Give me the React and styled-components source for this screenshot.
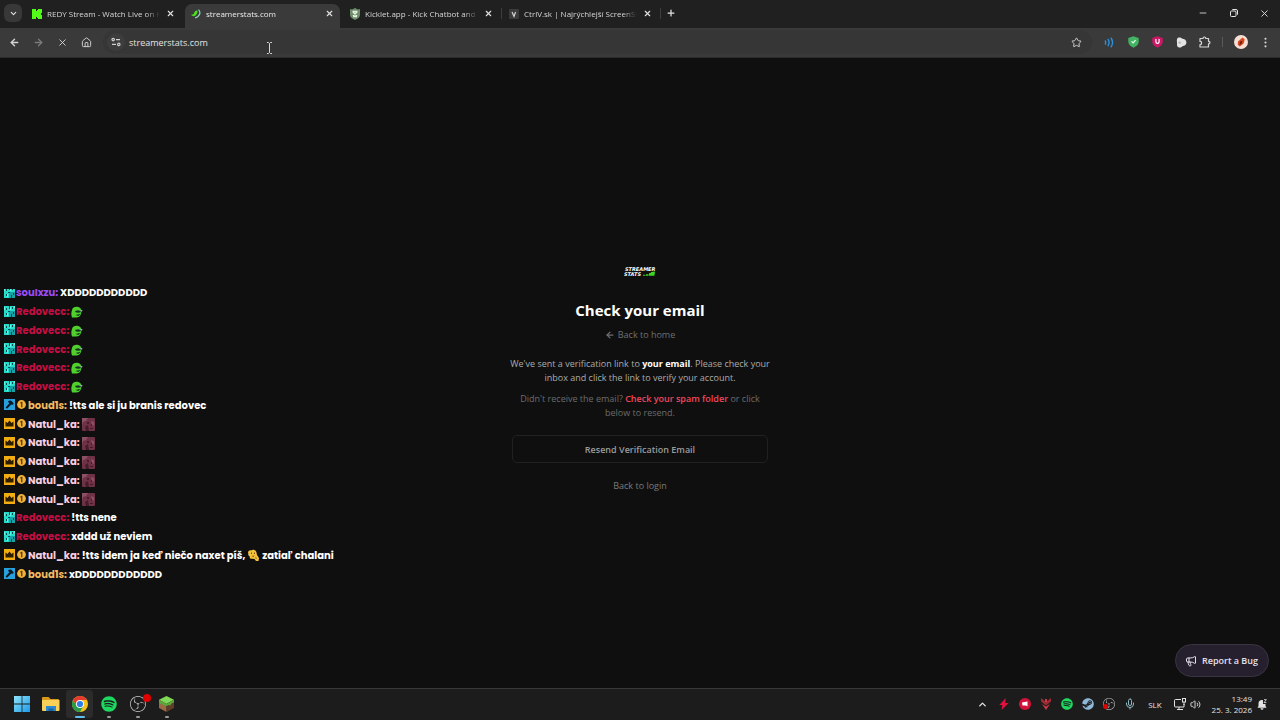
import React, { useState } from 'react';
import styled, { createGlobalStyle } from 'styled-components';
import {
	ArrowLeft,
	ArrowRight,
	ChevronDown,
	ChevronUp,
	EllipsisVertical,
	House,
	Megaphone,
	Mic,
	Minus,
	Plus,
	Star,
	Volume2,
	X,
} from 'lucide-react';
import { FaSpotify, FaSteam } from 'react-icons/fa';
import { SiObsstudio } from 'react-icons/si';

const GlobalStyle = createGlobalStyle`
	* {
		box-sizing: border-box;
	}
	body {
		margin: 0;
		background: #0f0f0f;
		font-family: 'Segoe UI', 'Open Sans', 'Noto Sans', sans-serif;
		font-size: 9px;
		color: #e3e3e3;
	}
	button,
	input {
		font: inherit;
		color: inherit;
		background: none;
		border: none;
		padding: 0;
		margin: 0;
	}
	button {
		cursor: pointer;
	}
	a {
		color: inherit;
		text-decoration: none;
	}
	p,
	h1,
	ul {
		margin: 0;
		padding: 0;
	}
	svg {
		display: block;
		flex-shrink: 0;
	}
`;

/* ---------- drawings ---------- */

const KickIcon = () => (
	<svg width='10' height='10' viewBox='0 0 10 10'>
		<path fill='#53fc18' d='M0 0h4v2h1V1h1V0h4v4H9v1H8v0h1v1h1v4H6V9H5V8H4v2H0z' />
	</svg>
);

const StatsIcon = () => (
	<svg width='10' height='10' viewBox='0 0 10 10'>
		<path fill='#4be01c' d='M0 5.6C1.800 6 3 5 3.300 3.400 4 1.800 5.400 1 6.400 1.600 7 3 6 5.600 4.200 6.800 2.800 7.600 1 7.200 0 5.600z' />
		<path fill='none' stroke='#8fd3c6' strokeWidth='1.200' d='M7.500.6c2.400 2.400 2 6.400-3.500 8.400' />
	</svg>
);

const KickletIcon = () => (
	<svg width='12' height='12' viewBox='0 0 12 12'>
		<path fill='#6e8c6a' d='M1 1l2 .6L6 0l3 1.6L11 1v6c0 2-2.500 4-5 5C3.500 11 1 9 1 7z' />
		<path fill='none' stroke='#e6f1e2' strokeWidth='1.300' d='M3.500 3.500h5M4 8.500h4M4 4l4 4M8 4L4 8' />
	</svg>
);

const CtrlVIcon = () => (
	<svg width='10' height='10' viewBox='0 0 10 10'>
		<rect width='10' height='10' rx='1' fill='#3b3b3b' />
		<path fill='none' stroke='#d5d5d5' strokeWidth='1.200' d='M3 3l2 4.500L6.600 3' />
	</svg>
);

const TuneIcon = () => (
	<svg width='10' height='10' viewBox='0 0 10 10' fill='none' stroke='#d0d0d0' strokeWidth='1.200'>
		<circle cx='2.200' cy='2.600' r='1.200' />
		<path d='M5 2.600h4M1 7.400h4' />
		<circle cx='7.800' cy='7.400' r='1.200' />
	</svg>
);

const WavesIcon = () => (
	<svg width='11' height='11' viewBox='0 0 11 11' fill='none' stroke='#2b8fdb' strokeWidth='1.400'>
		<path d='M1 3.500q1.400 2 0 4M3.800 2q2.600 3.500 0 7M6.800 .8q3.600 4.700 0 9.400' />
	</svg>
);

const ShieldIcon = ({ color, letter }) => (
	<svg width='11' height='12' viewBox='0 0 11 12'>
		<path fill={color} d='M5.500 .3L10.700 2v3.500c0 2.800-2.200 5-5.200 6.200C2.500 10.500.3 8.300.3 5.500V2z' />
		{letter ? (
			<path fill='none' stroke='#fff' strokeWidth='1.200' d='M3.900 3v2.800a1.600 1.600 0 003.200 0V3' />
		) : (
			<path fill='none' stroke='#e9ffee' strokeWidth='1.200' d='M3.600 5.400l1.500 1.500 2.500-2.700' />
		)}
	</svg>
);

const BlobIcon = () => (
	<svg width='11' height='11' viewBox='0 0 11 11'>
		<path fill='#e4e4e4' d='M2 .8c1.600-.9 3.500-.2 4.400 1 2 0 4 1.700 4 3.700S8.800 9 6.800 9C6 10.400 3.600 11 2 10c-1.400-1-.8-2.600-1-4.500C.8 3.800.6 1.700 2 .8z' />
		<circle cx='3.700' cy='5.600' r='1.200' fill='#b3b3b3' />
	</svg>
);

const PuzzleIcon = () => (
	<svg width='12' height='12' viewBox='0 0 12 12' fill='none' stroke='#d6d6d6' strokeWidth='1.200' strokeLinejoin='round'>
		<path d='M1 2.500h3c0-2 2.800-2 2.800 0H9.500v2.800c2 0 2 2.600 0 2.600V11H1V8.600c2.200 0 2.200-3.200 0-3.200z' />
	</svg>
);

const ProfileIcon = () => (
	<svg width='14' height='14' viewBox='0 0 14 14'>
		<circle cx='7' cy='7' r='7' fill='#f8dfd6' />
		<path fill='#d9481c' d='M4 6.500L8.500 2.600l2.200 1.600-1 4.200-4 3.200-2-2z' />
		<path fill='#6b2412' d='M6 6.500l2.500-.7L7.500 9l-2 1z' />
	</svg>
);

const RestoreIcon = () => (
	<svg width='8' height='8' viewBox='0 0 8 8' fill='none' stroke='#e3e3e3'>
		<rect x='.5' y='2' width='5.500' height='5.500' rx='1' />
		<path d='M2.300.5H6A1.500 1.500 0 017.500 2v3.700' />
	</svg>
);

const CursorIcon = () => (
	<svg width='7' height='12' viewBox='0 0 7 12' fill='none' stroke='#d8d8d8'>
		<path d='M1 .5h1.500l1 1 1-1H6M1 11.500h1.500l1-1 1 1H6M3.500 1.500v9' />
	</svg>
);

const SubBadge = () => (
	<svg width='11' height='11' viewBox='0 0 11 11'>
		<path fill='#25dccb' d='M0 0h11v6H5v5H0z' />
		<path fill='#16a3a8' d='M5 5h6v6H5z' />
		<path fill='#0b4a50' d='M2 2h1v2H2zM5 0h1v3H5zM8 1h1v2H8zM2 7h1v2H2zM7 8h1v3H7zM9 6h1v2H9zM4 5h2v1H4z' />
		<path fill='#5ff5e4' d='M0 1h1v3H0zM6 1h1v3H6zM3 7h1v3H3zM10 0h1v2h-1z' />
	</svg>
);

const HammerBadge = () => (
	<svg width='11' height='11' viewBox='0 0 11 11'>
		<rect width='11' height='11' fill='#27a0dd' />
		<path fill='#0b1a22' d='M4 2l3-.4 2.600 2.600-.5 1.500-1.300-.2-1 .6L3 9.800 1.600 8.400 5.200 4.600z' />
	</svg>
);

const CrownBadge = () => (
	<svg width='11' height='11' viewBox='0 0 11 11'>
		<rect width='11' height='11' fill='#f2ad13' />
		<path fill='#2c1d00' d='M1.500 3.500l2 1.500L5.500 2.500l2 2.500 2-1.500v5h-8z' />
	</svg>
);

const CoinBadge = () => (
	<svg width='9' height='9' viewBox='0 0 9 9'>
		<circle cx='4.500' cy='4.500' r='4.400' fill='#f1b23a' />
		<path fill='#59380a' d='M3.200 2.400L4.600 1.800h.8v5.400H4.100V3.300l-.9.3z' />
	</svg>
);

const FrogEmote = () => (
	<svg width='12' height='12' viewBox='0 0 12 12'>
		<path fill='#4fd02c' d='M1 4C1.500 1.500 4 .4 6.500.8c2.200.2 3.500 1.700 4 3.700L10 8c-1 2.500-2.500 3.600-5 3.500H1C0 9 .2 6 1 4z' />
		<path fill='#12351c' d='M4 5C6 4.200 8 4.300 10.500 4.400l1 1.200L8 6.800 5 6.500zM4.500 9l5-1.300-2 2.300z' />
		<path fill='#d6f5e4' d='M7.500 4.800l4-.6-.6 1.400z' />
	</svg>
);

const FaceEmote = () => (
	<svg width='13' height='13' viewBox='0 0 13 13'>
		<rect width='13' height='13' rx='1' fill='#6f3145' />
		<path fill='#8c5060' d='M0 0h6l-2 3-3 1-1 4zM9 3l3 1v4l-2-1z' />
		<path fill='#451c2b' d='M5 4h2v2H5zM9 6h1v2H9zM3 9l3-2 1 6H4zM8 10h3v1H8z' />
	</svg>
);

const WaveEmote = () => (
	<svg width='13' height='13' viewBox='0 0 13 13'>
		<path fill='#f3c33c' d='M1 4c0-2 1.500-3 3-2.500C6-.3 9 1 9.500 3.500L10 6l2 3-.5 3H9L7.500 10 3 9.500 2.500 7z' />
		<path fill='#8a4d14' d='M4 3.500h1V5H4zM7 3.500h1V5H7zM4.500 7l3-.5-1 1.500zM8 9l1-1 1 2z' />
		<path fill='#fff0bb' d='M1 5l2 1-1 1z' />
	</svg>
);

const BrandLogo = () => (
	<svg
		width='32'
		height='10'
		viewBox='0 0 32 10'
		fontFamily='"DejaVu Sans", sans-serif'
		fontWeight='700'
		fontStyle='italic'
		fontSize='5'
	>
		<text x='1' y='4' fill='#fff'>STREAMER</text>
		<text x='0' y='9' fill='#fff'>STATS</text>
		<path fill='#3ed622' d='M19 7.800h2.500v1H19zM22 7.200h2.500v1.600H22zM25 6.200l2-.4V5l4-.6-.6 4.400H25z' />
	</svg>
);

const WindowsIcon = () => (
	<svg width='16' height='16' viewBox='0 0 16 16'>
		<defs>
			<linearGradient id='win' x1='0' y1='0' x2='1' y2='1'>
				<stop offset='0' stopColor='#8fe3fb' />
				<stop offset='1' stopColor='#1b9be8' />
			</linearGradient>
		</defs>
		<path fill='url(#win)' d='M0 0h7.600v7.600H0zM8.400 0H16v7.600H8.400zM0 8.400h7.600V16H0zM8.400 8.400H16V16H8.400z' />
	</svg>
);

const FolderIcon = () => (
	<svg width='18' height='16' viewBox='0 0 18 16'>
		<path fill='#d99a1c' d='M1 1h5.500l2 2H16a1 1 0 011 1v4H0V2a1 1 0 011-1z' />
		<path fill='#f9d058' d='M0 4h17.500v10a1 1 0 01-1 1H1a1 1 0 01-1-1z' />
		<path fill='#2d88cf' d='M4 10h10v5H4z' />
		<path fill='#1767a5' d='M6.500 12.500h5V15h-5z' />
	</svg>
);

const ChromeIcon = () => (
	<svg width='16' height='16' viewBox='0 0 16 16'>
		<circle cx='8' cy='8' r='8' fill='#f6c31c' />
		<path fill='#e33b2e' d='M1.070 4A8 8 0 0114.930 4H8L4.540 10z' />
		<path fill='#279b48' d='M1.070 4A8 8 0 008 16l3.460-6H4.540z' />
		<circle cx='8' cy='8' r='4' fill='#fff' />
		<circle cx='8' cy='8' r='3.100' fill='#2f7de9' />
	</svg>
);

const BlockIcon = () => (
	<svg width='15' height='16' viewBox='0 0 15 16'>
		<path fill='#7ed957' d='M7.500 0L15 3.700 7.500 8 0 3.700z' />
		<path fill='#9a6a45' d='M0 3.700L7.500 8v8L0 12z' />
		<path fill='#5f3d28' d='M15 3.700L7.500 8v8l7.500-4z' />
		<path fill='#5aa83c' d='M0 3.700L7.500 8v2L5.500 9v1.500L3.500 8.300 1.500 8 0 6zM15 3.700L7.500 8v2l2-1 1.500.5 2-2.500 2-.6z' />
	</svg>
);

const BoltIcon = () => (
	<svg width='10' height='12' viewBox='0 0 10 12'>
		<path fill='#e0103f' d='M6.800 0L.3 7h3L2.600 12 9.700 5H6.200z' />
	</svg>
);

const RedDotIcon = () => (
	<svg width='12' height='12' viewBox='0 0 12 12'>
		<circle cx='6' cy='6' r='6' fill='#d3123b' />
		<path fill='#fff' d='M3 4.500L8.500 3.500V8.500L7 7.500H3.500z' />
	</svg>
);

const ArrowsIcon = () => (
	<svg width='10' height='12' viewBox='0 0 10 12'>
		<path fill='#9c2a35' d='M0 0l5 4 5-4v3.500L5 7.500 0 3.500z' />
		<path fill='#c93a45' d='M1 6l4 2.500L9 6 5 12zM4 1h2v3H4z' />
	</svg>
);

const MonitorIcon = () => (
	<svg width='12' height='12' viewBox='0 0 12 12' fill='none' stroke='#e3e3e3'>
		<path d='M7 1.500H1.500a1 1 0 00-1 1v5.500a1 1 0 001 1h8.500V6M3 11.500h6M5 9v2' />
		<rect x='8.500' y='.5' width='3' height='3.500' />
		<path d='M10 4v3' />
	</svg>
);

const SnoozeBellIcon = () => (
	<svg width='10' height='11' viewBox='0 0 10 11'>
		<path fill='#e3e3e3' d='M1.500 4.500a3.500 3.500 0 013.500-3.500l1 .2V5h2.500v2l1 1.800H.5L1.500 7zM3.500 9.300h3a1.500 1.500 0 01-3 0z' />
		<path fill='none' stroke='#e3e3e3' strokeWidth='.8' d='M7 .6h2.400L7 3.600h2.400' />
	</svg>
);

/* ---------- data ---------- */

const tabs = [
	{ title: 'REDY Stream - Watch Live on K', icon: <KickIcon /> },
	{ title: 'streamerstats.com', icon: <StatsIcon />, active: true },
	{ title: 'Kicklet.app - Kick Chatbot and', icon: <KickletIcon />, divider: true },
	{ title: 'CtrlV.sk | Najrýchlejší ScreenSho', icon: <CtrlVIcon />, divider: true },
];

const redovecc = { name: 'Redovecc', color: '#c30f45', badges: ['sub'] };
const natulka = { name: 'Natul_ka', color: '#f7cfe0', badges: ['crown', 'coin'] };
const boudis = { name: 'boud1s', color: '#f3b95f', badges: ['hammer', 'coin'] };

const messages = [
	{ user: { name: 'soulxzu', color: '#9a4cf5', badges: ['sub'] }, text: 'XDDDDDDDDDDD' },
	...Array(5).fill({ user: redovecc, emote: 'frog' }),
	{ user: boudis, text: '!tts ale si ju branis redovec' },
	...Array(5).fill({ user: natulka, emote: 'face' }),
	{ user: redovecc, text: '!tts nene' },
	{ user: redovecc, text: 'xddd už neviem' },
	{ user: natulka, text: '!tts idem ja keď niečo naxet píš,', emote: 'wave', after: 'zatiaľ chalani' },
	{ user: boudis, text: 'xDDDDDDDDDDDD' },
];

const badgeIcons = { sub: <SubBadge />, crown: <CrownBadge />, coin: <CoinBadge />, hammer: <HammerBadge /> };
const emotes = { frog: <FrogEmote />, face: <FaceEmote />, wave: <WaveEmote /> };

const App = () => {
	const [url, setUrl] = useState('streamerstats.com');

	return (
		<>
			<GlobalStyle />
			<Screen>
				<TabStrip>
					<TabSearch aria-label='Search tabs'>
						<ChevronDown size={9} strokeWidth={3} />
					</TabSearch>
					<Tabs>
						{tabs.map((tab) => (
							<Tab key={tab.title} $active={tab.active} $divider={tab.divider}>
								<TabIcon>{tab.icon}</TabIcon>
								<TabTitle $active={tab.active}>{tab.title}</TabTitle>
								<TabClose aria-label={'Close ' + tab.title}>
									<X size={9} strokeWidth={3} />
								</TabClose>
							</Tab>
						))}
					</Tabs>
					<NewTab aria-label='New tab'>
						<Plus size={10} strokeWidth={3} />
					</NewTab>
					<WindowButtons>
						<button aria-label='Minimize'>
							<Minus size={10} />
						</button>
						<button aria-label='Restore'>
							<RestoreIcon />
						</button>
						<button aria-label='Close window'>
							<X size={11} strokeWidth={2} />
						</button>
					</WindowButtons>
				</TabStrip>

				<Toolbar>
					<NavButtons>
						<ToolButton aria-label='Back'>
							<ArrowLeft size={11} strokeWidth={3} />
						</ToolButton>
						<ToolButton aria-label='Forward' $dim>
							<ArrowRight size={11} strokeWidth={3} />
						</ToolButton>
						<ToolButton aria-label='Stop'>
							<X size={11} />
						</ToolButton>
						<ToolButton aria-label='Home'>
							<House size={11} />
						</ToolButton>
					</NavButtons>
					<AddressBar>
						<SiteInfo aria-label='Site information'>
							<TuneIcon />
						</SiteInfo>
						<AddressInput aria-label='Address' value={url} onChange={(e) => setUrl(e.target.value)} />
						<ToolButton aria-label='Bookmark'>
							<Star size={11} />
						</ToolButton>
						<Pointer>
							<CursorIcon />
						</Pointer>
					</AddressBar>
					<Extensions>
						<ToolButton aria-label='Audio'>
							<WavesIcon />
						</ToolButton>
						<ToolButton aria-label='Protection'>
							<ShieldIcon color='#43b262' />
						</ToolButton>
						<ToolButton aria-label='Blocker'>
							<ShieldIcon color='#cf1767' letter />
						</ToolButton>
						<ToolButton aria-label='Extension'>
							<BlobIcon />
						</ToolButton>
						<ToolButton aria-label='Extensions'>
							<PuzzleIcon />
						</ToolButton>
					</Extensions>
					<Account>
						<ToolButton aria-label='Profile'>
							<ProfileIcon />
						</ToolButton>
						<ToolButton aria-label='Menu'>
							<EllipsisVertical size={13} />
						</ToolButton>
					</Account>
				</Toolbar>

				<Page>
					<Card>
						<BrandLogo />
						<Title>Check your email</Title>
						<HomeLink href='#home'>
							<ArrowLeft size={10} strokeWidth={3} />
							Back to home
						</HomeLink>
						<Message>
							We've sent a verification link to <Strong>your email</Strong>. Please check your inbox and click the
							link to verify your account.
						</Message>
						<Hint>
							Didn't receive the email? <Spam>Check your spam folder</Spam> or click below to resend.
						</Hint>
						<ResendButton>Resend Verification Email</ResendButton>
						<LoginLink href='#login'>Back to login</LoginLink>
					</Card>

					<Chat>
						<ChatList>
							{messages.map((m, i) => (
								<ChatRow key={i}>
									<Badges>
										{m.user.badges.map((b) => (
											<React.Fragment key={b}>{badgeIcons[b]}</React.Fragment>
										))}
									</Badges>
									<ChatName $color={m.user.color} $wide={m.user.badges.length > 1}>
										{m.user.name}:
									</ChatName>
									{m.text && <span>{m.text}</span>}
									{m.emote && emotes[m.emote]}
									{m.after && <span>{m.after}</span>}
								</ChatRow>
							))}
						</ChatList>
					</Chat>

					<BugButton>
						<Megaphone size={12} strokeWidth={2} />
						Report a Bug
					</BugButton>
				</Page>

				<Taskbar>
					<Apps>
						<AppButton aria-label='Start'>
							<WindowsIcon />
						</AppButton>
						<AppButton aria-label='File Explorer'>
							<FolderIcon />
						</AppButton>
						<AppButton aria-label='Chrome' $focused $running>
							<ChromeIcon />
						</AppButton>
						<AppButton aria-label='Spotify' $running>
							<FaSpotify size={16} color='#1ed760' />
						</AppButton>
						<AppButton aria-label='OBS Studio' $running>
							<SiObsstudio size={16} color='#c9c9c9' />
							<RecordDot />
						</AppButton>
						<AppButton aria-label='Minecraft' $running>
							<BlockIcon />
						</AppButton>
					</Apps>
					<Tray>
						<TrayIcons>
							<ChevronUp size={11} strokeWidth={3} />
							<BoltIcon />
							<RedDotIcon />
							<ArrowsIcon />
							<FaSpotify size={12} color='#1ed760' />
							<FaSteam size={12} color='#8fb7d8' />
							<TrayObs>
								<SiObsstudio size={12} color='#c9c9c9' />
								<RecordDot $small />
							</TrayObs>
							<Mic size={12} color='#8fb9c6' />
						</TrayIcons>
						<Language>SLK</Language>
						<Network>
							<MonitorIcon />
							<Volume2 size={11} />
						</Network>
						<Clock>
							<span>13:49</span>
							<span>25. 3. 2026</span>
						</Clock>
						<SnoozeBellIcon />
					</Tray>
				</Taskbar>
			</Screen>
		</>
	);
};

export default App;

/* ---------- browser ---------- */

export const Screen = styled.div`
	display: flex;
	flex-direction: column;
	min-height: 100vh;
`;
export const TabStrip = styled.header`
	display: flex;
	align-items: center;
	height: 28px;
	padding: 0 0 2px 4px;
	background: #202020;
`;
export const TabSearch = styled.button`
	display: grid;
	place-items: center;
	width: 18px;
	height: 18px;
	border-radius: 6px;
	background: #383838;
`;
export const Tabs = styled.div`
	display: flex;
	align-self: stretch;
	gap: 4px;
	margin: 4px 0 -2px 4px;
`;
export const Tab = styled.div`
	display: flex;
	align-items: center;
	width: 155px;
	padding: 0 6px 5px 5px;
	position: relative;
	border-radius: 7px 7px 0 0;
	background: ${({ $active }) => ($active ? '#3a3a3a' : 'transparent')};
	&::after {
		content: '';
		display: ${({ $divider }) => ($divider ? 'block' : 'none')};
		position: absolute;
		right: -3px;
		top: 4px;
		width: 1px;
		height: 11px;
		background: #3d3d3d;
	}
`;
export const TabIcon = styled.span`
	display: grid;
	place-items: center;
	width: 12px;
	margin-right: 4px;
`;
export const TabTitle = styled.button`
	flex: 1;
	min-width: 0;
	overflow: hidden;
	white-space: nowrap;
	text-align: left;
	font-size: 8px;
	line-height: 14px;
	color: ${({ $active }) => ($active ? '#ececec' : '#d6d6d6')};
	mask-image: linear-gradient(90deg, #000 calc(100% - 14px), transparent);
`;
export const TabClose = styled.button`
	display: grid;
	place-items: center;
	width: 10px;
	height: 14px;
	margin-left: 5px;
`;
export const NewTab = styled.button`
	display: grid;
	place-items: center;
	width: 18px;
	height: 18px;
	margin-left: 4px;
`;
export const WindowButtons = styled.div`
	display: flex;
	margin-left: auto;
	button {
		display: grid;
		place-items: center;
		width: 31px;
		height: 26px;
	}
`;
export const Toolbar = styled.div`
	display: flex;
	align-items: center;
	height: 30px;
	padding: 0 4px 1px 3px;
	background: #3a3a3a;
	border-bottom: 1px solid #2b2b2b;
`;
export const NavButtons = styled.div`
	display: flex;
	gap: 2px;
`;
export const ToolButton = styled.button`
	display: grid;
	place-items: center;
	width: 22px;
	height: 22px;
	color: ${({ $dim }) => ($dim ? '#7a7a7a' : '#d6d6d6')};
`;
export const AddressBar = styled.div`
	display: flex;
	align-items: center;
	flex: 1;
	height: 24px;
	margin: 0 6px;
	padding: 0 5px 0 4px;
	position: relative;
	border-radius: 12px;
	background: #363636;
`;
export const SiteInfo = styled.button`
	display: grid;
	place-items: center;
	width: 18px;
	height: 18px;
	border-radius: 9px;
	background: #3d3d3d;
`;
export const AddressInput = styled.input`
	flex: 1;
	min-width: 0;
	height: 18px;
	margin-left: 4px;
	outline: none;
`;
/* text pointer hovering over the address bar */
export const Pointer = styled.span`
	position: absolute;
	left: 163px;
	top: 12px;
`;
export const Extensions = styled.div`
	display: flex;
	gap: 2px;
	padding-right: 6px;
`;
export const Account = styled.div`
	display: flex;
	align-items: center;
	gap: 2px;
	&::before {
		content: '';
		width: 1px;
		height: 10px;
		margin-right: 5px;
		background: #5a5a5a;
	}
`;

/* ---------- page ---------- */

export const Page = styled.main`
	display: flex;
	flex: 1;
	align-items: center;
	justify-content: center;
	position: relative;
	background: #0f0f0f;
`;
export const Card = styled.section`
	display: flex;
	flex-direction: column;
	align-items: center;
	width: 264px;
	padding: 14px 4px 0;
	text-align: center;
`;
export const Title = styled.h1`
	margin-top: 21px;
	font-size: 15px;
	line-height: 24px;
	font-weight: 700;
	color: #fff;
`;
export const HomeLink = styled.a`
	display: flex;
	align-items: center;
	gap: 3px;
	margin-top: 6px;
	line-height: 14px;
	color: #6f6f6f;
`;
export const Message = styled.p`
	margin: 15px -4px 0;
	line-height: 14px;
	color: #ababab;
`;
export const Strong = styled.strong`
	font-weight: 700;
	color: #fff;
`;
export const Hint = styled.p`
	margin-top: 7px;
	line-height: 14px;
	color: #6c6c6c;
`;
export const Spam = styled.strong`
	font-weight: 600;
	color: #f2465a;
`;
export const ResendButton = styled.button`
	width: 100%;
	height: 28px;
	margin-top: 15px;
	border: 1px solid #212121;
	border-radius: 5px;
	font-weight: 600;
	color: #9b9b9b;
`;
export const LoginLink = styled.a`
	margin-top: 16px;
	line-height: 14px;
	font-weight: 500;
	color: #7a7a7a;
`;

/* chat widget floats over the page, older messages are cut off at the top */
export const Chat = styled.aside`
	display: flex;
	flex-direction: column;
	justify-content: flex-end;
	position: absolute;
	left: 4px;
	bottom: 104px;
	height: 295px;
	overflow: hidden;
	font-family: Poppins, Inter, sans-serif;
	font-size: 10px;
	font-weight: 700;
	color: #fff;
`;
export const ChatList = styled.ul`
	display: flex;
	flex-direction: column;
	flex-shrink: 0;
	height: 300px;
	list-style-type: none;
`;
export const ChatRow = styled.li`
	display: flex;
	flex: 1;
	align-items: center;
	gap: 2px;
	white-space: nowrap;
`;
export const Badges = styled.span`
	display: flex;
	align-items: center;
	gap: 2px;
	padding-bottom: 2px;
	margin-right: -1px;
`;
export const ChatName = styled.span`
	margin-left: ${({ $wide }) => ($wide ? '1px' : '0')};
	color: ${({ $color }) => $color};
`;

export const BugButton = styled.button`
	display: flex;
	align-items: center;
	gap: 5px;
	position: absolute;
	right: 11px;
	bottom: 11px;
	height: 33px;
	padding: 0 10px 0 9px;
	border: 1px solid #3b3543;
	border-radius: 17px;
	background: #261f2e;
	font-weight: 600;
	color: #e6e0ea;
`;

/* ---------- taskbar ---------- */

export const Taskbar = styled.footer`
	display: flex;
	align-items: center;
	justify-content: space-between;
	height: 32px;
	padding: 0 13px 1px 8px;
	border-top: 1px solid #383838;
	background: #1c1c1c;
`;
export const Apps = styled.nav`
	display: flex;
	gap: 2px;
`;
export const AppButton = styled.button`
	display: grid;
	place-items: center;
	width: 27px;
	height: 28px;
	position: relative;
	border-radius: 3px;
	background: ${({ $focused }) => ($focused ? '#2b2b2b' : 'transparent')};
	&::after {
		content: '';
		display: ${({ $running }) => ($running ? 'block' : 'none')};
		position: absolute;
		bottom: 0;
		width: ${({ $focused }) => ($focused ? '10px' : '4px')};
		height: 2px;
		border-radius: 1px;
		background: ${({ $focused }) => ($focused ? '#60bdf0' : '#9a9a9a')};
	}
`;
export const RecordDot = styled.i`
	position: absolute;
	width: ${({ $small }) => ($small ? '5px' : '8px')};
	height: ${({ $small }) => ($small ? '5px' : '8px')};
	top: ${({ $small }) => ($small ? '6px' : '4px')};
	${({ $small }) => ($small ? 'left: 0;' : 'right: 0;')}
	border-radius: 50%;
	background: #e00000;
`;
export const Tray = styled.div`
	display: flex;
	align-items: center;
`;
export const TrayIcons = styled.div`
	display: grid;
	grid-template-columns: repeat(8, 21px);
	justify-items: center;
	align-items: center;
`;
export const TrayObs = styled.span`
	position: relative;
`;
export const Language = styled.span`
	margin-left: 8px;
	font-size: 8px;
`;
export const Network = styled.span`
	display: flex;
	align-items: center;
	gap: 4px;
	margin: 0 11px 0 12px;
`;
export const Clock = styled.time`
	display: flex;
	flex-direction: column;
	align-items: flex-end;
	margin-right: 5px;
	font-size: 8px;
	line-height: 11px;
`;
